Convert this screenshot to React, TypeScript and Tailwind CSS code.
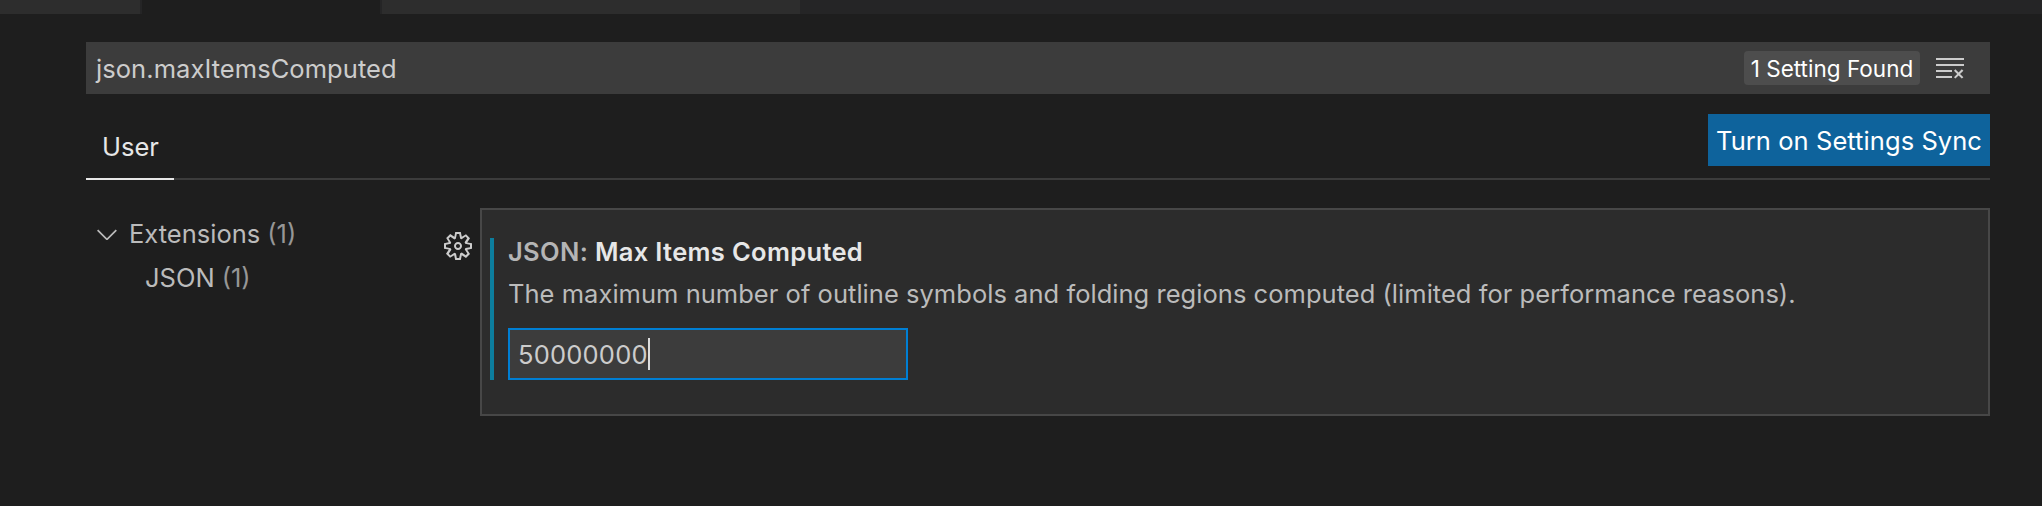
import { VscChevronDown, VscClearAll, VscGear } from "react-icons/vsc";

function TabStrip() {
  return (
    <div className="flex h-[14px] bg-[#252526]">
      <div className="w-[142px] border-r-2 border-[#252526] bg-[#2d2d2d]" />
      <div className="w-[240px] border-r-2 border-[#252526] bg-[#1e1e1e]" />
      <div className="w-[418px] bg-[#2d2d2d]" />
    </div>
  );
}

function SearchBar() {
  return (
    <div className="flex h-[52px] items-center bg-[#3c3c3c] pl-[10px] pr-[24px] text-[#cccccc]">
      <span className="flex-1 pt-[2px] leading-[50px] tracking-[0.06px]">json.maxItemsComputed</span>
      <span className="flex h-[34px] w-[176px] items-center justify-center rounded-[4px] bg-[#4d4d4d] pt-px text-[22.5px] tracking-[0.02px] text-white">
        1 Setting Found
      </span>
      <VscClearAll className="ml-[14px] size-[32px]" />
    </div>
  );
}

function TargetBar() {
  return (
    <div className="mt-[20px] flex h-[66px] items-start justify-between border-b-2 border-[#3c3c3c]">
      <div className="flex h-[66px] w-[88px] shrink-0 items-center justify-center border-b-2 border-[#e7e7e7] pl-px pt-[2px] text-[#e7e7e7]">
        User
      </div>
      <div className="flex h-[52px] w-[282px] items-center justify-center bg-[#0e639c] pt-[2px] tracking-[0.07px] text-white">
        Turn on Settings Sync
      </div>
    </div>
  );
}

function Toc() {
  return (
    <div className="w-[354px] pt-[4px] text-[#bbbbbb]">
      <div className="flex h-[44px] items-center">
        <VscChevronDown className="ml-[5px] size-[32px]" />
        <span className="ml-[6px]">Extensions</span>
        <span className="ml-[7px] text-[#969696]">(1)</span>
      </div>
      <div className="flex h-[44px] items-center pl-[59px]">
        <span>JSON</span>
        <span className="ml-[7px] text-[#969696]">(1)</span>
      </div>
    </div>
  );
}

function SettingCard() {
  return (
    <div className="h-[208px] flex-1 border-2 border-[#474747] bg-[#2c2c2c] pl-[8px] pt-[28px]">
      <div className="h-[142px] border-l-4 border-[#0c7d9d] pl-[14px]">
        <div className="h-[27px] whitespace-nowrap pt-px font-semibold leading-[26px] tracking-[0.33px] text-[#e7e7e7]">
          <span className="text-[#b5b5b5]">JSON: </span>
          <span>Max Items Computed</span>
        </div>
        <div className="mt-[14px] h-[30px] whitespace-nowrap leading-[30px] tracking-[0.032px] text-[#bbbbbb]">
          The maximum number of outline symbols and folding regions computed (limited for performance reasons).
        </div>
        <div className="mt-[19px] flex h-[52px] w-[400px] items-center border-2 border-[#007fd4] bg-[#3c3c3c] pl-[8px] text-[#cccccc]">
          <span className="pt-[2px] tracking-[0.2px]">50000000</span>
          <span className="h-[32px] w-[2px] bg-[#dddddd]" />
        </div>
      </div>
    </div>
  );
}

export default function App() {
  return (
    <div className="h-[506px] w-[2042px] overflow-hidden bg-[#1e1e1e] font-['Inter',sans-serif] text-[25.5px]">
      <TabStrip />
      <div className="pl-[86px] pr-[52px] pt-[28px]">
        <SearchBar />
        <TargetBar />
        <div className="mt-[28px] flex">
          <Toc />
          <div className="w-[40px] pt-[22px]">
            <VscGear className="ml-[2px] size-[32px] text-[#cccccc]" />
          </div>
          <SettingCard />
        </div>
      </div>
    </div>
  );
}
